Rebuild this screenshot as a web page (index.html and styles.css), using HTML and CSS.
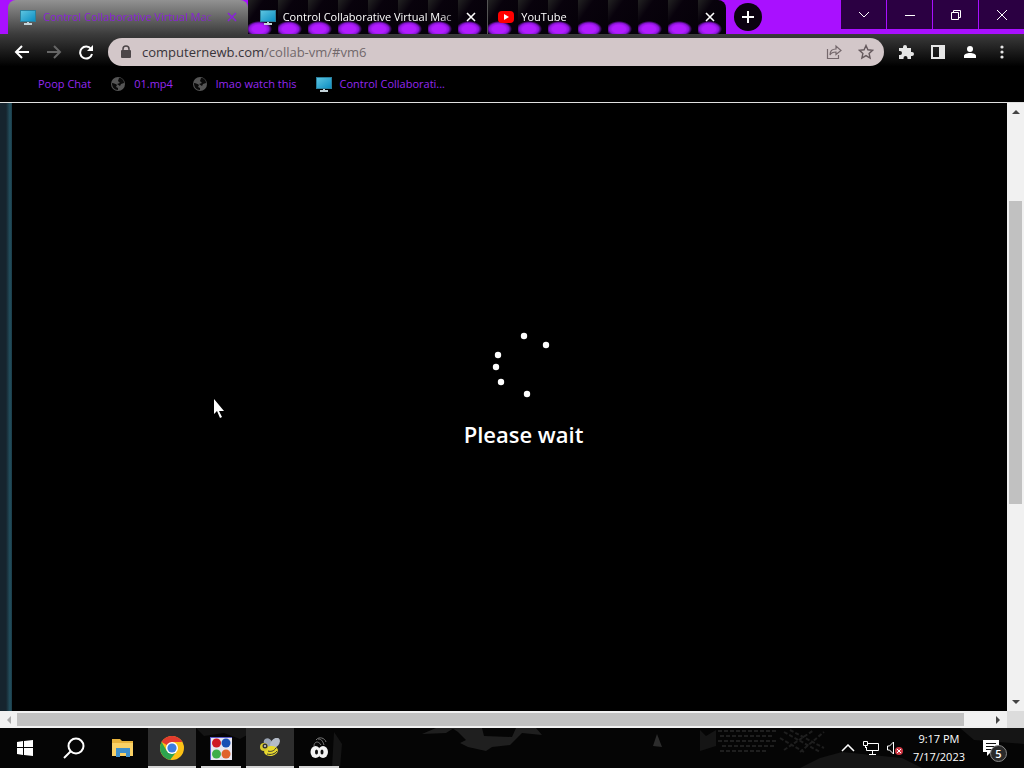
FILE: index.html
```html
<!DOCTYPE html>
<html lang="en">
<head>
    <meta charset="UTF-8">
    <meta name="viewport" content="width=device-width, initial-scale=1.0">
    <title>Control Collaborative Virtual Machines</title>
    <link rel="stylesheet" href="styles.css">
</head>
<body>

    <!-- shared shapes -->
    <svg class="defs" width="0" height="0">
        <defs>
            <linearGradient id="screenFill" x1="0" y1="0" x2="1" y2="1">
                <stop offset="0" stop-color="#5cc4e0"/>
                <stop offset="1" stop-color="#0d8fc4"/>
            </linearGradient>
            <symbol id="monitor" viewBox="0 0 16 16">
                <rect x="0" y="1" width="16" height="12" fill="#2b7f9c"/>
                <rect x="1" y="2" width="14" height="10" fill="url(#screenFill)"/>
                <path d="M7 13h2v1h3v2H4v-2h3z" fill="#c4d4da"/>
            </symbol>
            <symbol id="globe" viewBox="0 0 16 16">
                <circle cx="8" cy="8" r="7" fill="#555"/>
                <path d="M2 7c2 0 4 1 5 2l-1 2 2 1v2C4 14 2 11 2 7zM9 2c3 0 5 2 5 5l-3 1-1 2-3-2 3-1-2-2z" fill="#0a0a0a"/>
            </symbol>
            <symbol id="cross" viewBox="0 0 10 10">
                <path d="M1 1l8 8M9 1l-8 8" fill="none" stroke="currentColor" stroke-width="1.600"/>
            </symbol>
        </defs>
    </svg>

    <header class="titlebar">
        <div class="tabs">
            <div class="tab active">
                <svg class="favicon"><use href="#monitor"/></svg>
                <span class="tab-title">Control Collaborative Virtual Mac</span>
                <button class="tab-close" aria-label="Close tab"><svg><use href="#cross"/></svg></button>
            </div>
            <div class="tab">
                <svg class="favicon"><use href="#monitor"/></svg>
                <span class="tab-title">Control Collaborative Virtual Mac</span>
                <button class="tab-close" aria-label="Close tab"><svg><use href="#cross"/></svg></button>
            </div>
            <div class="tab last">
                <svg class="favicon" viewBox="0 0 16 16">
                    <rect x="0" y="2" width="16" height="12" rx="4" fill="#f00"/>
                    <path d="M6 5l5 3-5 3z" fill="#fff"/>
                </svg>
                <span class="tab-title">YouTube</span>
                <button class="tab-close" aria-label="Close tab"><svg><use href="#cross"/></svg></button>
            </div>
        </div>
        <button class="new-tab" aria-label="New tab">
            <svg width="12" height="12" viewBox="0 0 12 12"><path d="M6 0v12M0 6h12" stroke="#fff" stroke-width="2"/></svg>
        </button>
        <div class="window-buttons">
            <button aria-label="Search tabs"><svg width="12" height="12" viewBox="0 0 12 12"><path d="M1 3l5 5 5-5"/></svg></button>
            <button aria-label="Minimize"><svg width="12" height="12" viewBox="0 0 12 12"><path d="M1 6.500h10"/></svg></button>
            <button aria-label="Restore"><svg width="12" height="12" viewBox="0 0 12 12"><path d="M1.500 3.500h7v7h-7zM3.500 3.500v-2h7v7h-2"/></svg></button>
            <button aria-label="Close"><svg width="12" height="12" viewBox="0 0 12 12"><path d="M1 1l10 10M11 1l-10 10"/></svg></button>
        </div>
    </header>

    <nav class="toolbar">
        <button aria-label="Back"><svg width="16" height="16" viewBox="0 0 16 16"><path d="M15 8H2M8 2L2 8l6 6" fill="none" stroke="#fff" stroke-width="2"/></svg></button>
        <button aria-label="Forward" disabled><svg width="16" height="16" viewBox="0 0 16 16"><path d="M1 8h13M8 2l6 6-6 6" fill="none" stroke="#666" stroke-width="2"/></svg></button>
        <button aria-label="Reload"><svg width="16" height="16" viewBox="0 0 16 16"><path d="M13 5a6 6 0 1 0 1 5" fill="none" stroke="#fff" stroke-width="2"/><path d="M15 1v6H9z" fill="#fff"/></svg></button>
        <div class="omnibox">
            <svg width="10" height="14" viewBox="0 0 10 14"><rect x="0" y="5" width="10" height="8" rx="1" fill="#4c4648"/><path d="M2 6V4a3 3 0 0 1 6 0v2" fill="none" stroke="#4c4648" stroke-width="1.500"/></svg>
            <a class="address" href="#vm6">computernewb.com<span>/collab-vm/#vm6</span></a>
            <button aria-label="Share"><svg width="16" height="16" viewBox="0 0 16 16"><path d="M1.500 5v9.500h11V11M4 11c0-4 2-6 6-6V2l5 4.500-5 4V8C7 8 5 9 4 11z" fill="none" stroke="#75686c" stroke-width="1.200"/></svg></button>
            <button aria-label="Bookmark"><svg width="16" height="16" viewBox="0 0 16 16"><path d="M8 1.500l1.900 4.300 4.700.5-3.500 3.100 1 4.600L8 11.600 3.900 14l1-4.600L1.400 6.300l4.700-.5z" fill="none" stroke="#65595d" stroke-width="1.400"/></svg></button>
        </div>
        <button aria-label="Extensions"><svg width="16" height="16" viewBox="0 0 16 16"><path d="M1 4h4V3a2 2 0 0 1 4 0v1h4v4h1a2 2 0 0 1 0 4h-1v3H9.500v-1a2 2 0 0 0-4 0v1H1v-4h1a2 2 0 0 0 0-4H1z" fill="#e6e6e6"/></svg></button>
        <button aria-label="Side panel"><svg width="16" height="16" viewBox="0 0 16 16"><path d="M1 1h14v14H1zM3 3v10h6V3z" fill="#e6e6e6" fill-rule="evenodd"/></svg></button>
        <button class="profile" aria-label="Profile"><svg width="14" height="14" viewBox="0 0 14 14"><circle cx="7" cy="4" r="3" fill="#fff"/><path d="M1 13v-2c0-2 3-3 6-3s6 1 6 3v2z" fill="#fff"/></svg></button>
        <button aria-label="Menu"><svg width="16" height="16" viewBox="0 0 16 16" fill="#e6e6e6"><circle cx="8" cy="3" r="1.600"/><circle cx="8" cy="8" r="1.600"/><circle cx="8" cy="13" r="1.600"/></svg></button>
    </nav>

    <nav class="bookmarks">
        <a href="#">Poop Chat</a>
        <a href="#"><svg><use href="#globe"/></svg>01.mp4</a>
        <a href="#"><svg><use href="#globe"/></svg>lmao watch this</a>
        <a href="#"><svg><use href="#monitor"/></svg>Control Collaborati...</a>
    </nav>

    <main class="viewport">
        <section class="screen">
            <svg class="spinner" width="60" height="68" viewBox="0 0 60 68" fill="#fff">
                <circle cx="30" cy="4" r="3.200"/>
                <circle cx="52" cy="13" r="3.200"/>
                <circle cx="4" cy="23" r="3.200"/>
                <circle cx="2" cy="35" r="3.200"/>
                <circle cx="7" cy="50" r="3.200"/>
                <circle cx="33" cy="62" r="3.200"/>
            </svg>
            <p>Please wait</p>
            <svg class="cursor" width="12" height="20" viewBox="0 0 12 20"><path d="M1 0v15l3-3 3 7 2-1-3-6h5z" fill="#fff"/></svg>
        </section>
        <div class="scroll-y">
            <svg viewBox="0 0 8 4"><path d="M0 4l4-4 4 4z"/></svg>
            <div class="thumb"></div>
            <svg viewBox="0 0 8 4"><path d="M0 0l4 4 4-4z"/></svg>
        </div>
        <div class="scroll-x">
            <svg class="dim" viewBox="0 0 4 8"><path d="M4 0L0 4l4 4z"/></svg>
            <div class="thumb"></div>
            <svg viewBox="0 0 4 8"><path d="M0 0l4 4-4 4z"/></svg>
        </div>
        <div class="corner"></div>
    </main>

    <footer class="taskbar">
        <svg class="wallpaper" viewBox="0 0 1024 40" preserveAspectRatio="none" fill="#1f1f1f">
            <path d="M196 0h90l-12 6-20-3-14 8-16-6-20 3zM334 4l8 12-2 24h-8z" opacity=".6"/>
            <path d="M422 6l14-6h18l-8 5zM452 0h30l2 8 28 1 4-9h20l6 7-20-2-12 12-18 2-6 4-18-4-8-4 6-3-8-8z"/>
            <path d="M657 6l5 13-9-1z" fill="#2c2c2c"/>
            <path d="M700 2l6 6 10-6v16l-16 5zM820 30l22-6 60 6 20 10H800z" opacity=".6"/>
            <path d="M718 3h60M720 8h54M718 13h60M722 18h52M720 23h48M784 4l36 20M780 10l24 14M790 2l34 18M800 24l24-20M784 22l30-20" stroke="#1e1e1e" stroke-width="2" stroke-dasharray="4 2" fill="none"/>
            <path d="M960 0h64v16l-50-4z" opacity=".6"/>
        </svg>
        <div class="apps">
            <button aria-label="Start"><svg width="16" height="16" viewBox="0 0 16 16" fill="#fff"><path d="M0 2l6-1v6H0zM7 1l9-1v7H7zM0 8h6v7l-6-1zM7 8h9v8l-9-1z"/></svg></button>
            <button aria-label="Search"><svg width="22" height="22" viewBox="0 0 22 22"><circle cx="13" cy="9" r="7.500" fill="none" stroke="#fff" stroke-width="2"/><path d="M8 14l-7 7" stroke="#fff" stroke-width="2"/></svg></button>
            <button aria-label="File Explorer"><svg width="22" height="20" viewBox="0 0 22 20"><path d="M0 1h8l2 2h11v15H0z" fill="#e8b33c"/><path d="M0 5h21v13H0z" fill="#fad165"/><path d="M4 10h14v9h-4v-4H8v4H4z" fill="#3f8fca"/></svg></button>
            <button class="open current" aria-label="Chrome"><svg width="24" height="24" viewBox="0 0 24 24"><circle cx="12" cy="12" r="12" fill="#fbc116"/><path d="M12 12L1.600 6A12 12 0 0 1 22.400 6H12z" fill="#e33b2e"/><path d="M1.600 6l5.200 9 5.200 3-2 5.800A12 12 0 0 1 1.600 6z" fill="#2da44e"/><path d="M10 24l7-9-5 3-5-3z" fill="#2da44e"/><circle cx="12" cy="12" r="6" fill="#fff"/><circle cx="12" cy="12" r="4.600" fill="#3b7de0"/></svg></button>
            <button class="open" aria-label="Games"><svg width="22" height="23" viewBox="0 0 22 23"><path d="M0 0h22v23H0z" fill="#5a5ac8"/><path d="M1 1h21v22H1z" fill="#e8e8f2"/><circle cx="6.500" cy="6" r="4.500" fill="#cf1824"/><circle cx="16" cy="6" r="4.500" fill="#174fb4"/><circle cx="6.500" cy="17" r="4.500" fill="#3fae49"/><circle cx="16" cy="17" r="4.500" fill="#e0642c"/></svg></button>
            <button class="open current" aria-label="Bee"><svg width="22" height="20" viewBox="0 0 22 20"><ellipse cx="9" cy="5" rx="4" ry="5" fill="#9aa4b4" transform="rotate(-30 9 5)"/><ellipse cx="16" cy="5" rx="6" ry="4" fill="#b5bcc8" transform="rotate(-50 16 5)"/><ellipse cx="12" cy="13" rx="7" ry="5" fill="#e8d92e" transform="rotate(-10 12 13)"/><path d="M9 13c3 1 6 0 8-3M8 16c4 1 8 0 10-3" stroke="#333" fill="none"/><circle cx="5" cy="9" r="4" fill="#d8c92e"/><circle cx="6" cy="8" r="2.500" fill="#333"/><circle cx="6" cy="8" r="1" fill="#ddd"/></svg></button>
            <button class="open" aria-label="Eyes"><svg width="18" height="22" viewBox="0 0 18 22"><path d="M4 9C4 5 8 3 11 8M6 3c3-4 9-2 10 2M8 2c4 0 5 3 6 6" fill="none" stroke="#777"/><ellipse cx="5.500" cy="15" rx="5" ry="6" fill="#f4f4f4"/><ellipse cx="13" cy="15" rx="5" ry="6" fill="#f4f4f4"/><ellipse cx="6.500" cy="15" rx="1.500" ry="2.500" fill="#111"/><ellipse cx="12" cy="15" rx="1.500" ry="2.500" fill="#111"/></svg></button>
        </div>
        <div class="tray">
            <svg width="14" height="8" viewBox="0 0 14 8"><path d="M1 7l6-6 6 6" fill="none" stroke="#fff" stroke-width="1.500"/></svg>
            <svg width="16" height="16" viewBox="0 0 16 16" fill="none" stroke="#fff"><path d="M5 3.500h10.500v7H3.500V7M.5 1.500h4v4h-4zM2.500 5v3M9.500 11v3M6 14.500h7"/></svg>
            <svg width="16" height="16" viewBox="0 0 16 16"><path d="M.5 6v4h2l4 4V2l-4 4z" fill="none" stroke="#fff"/><circle cx="12" cy="11" r="4" fill="#cf3945"/><path d="M10 9l4 4M14 9l-4 4" stroke="#fff"/></svg>
            <div class="clock">
                <time>9:17 PM</time>
                <time>7/17/2023</time>
            </div>
            <button class="notifications" aria-label="Notifications">
                <svg width="16" height="16" viewBox="0 0 16 16"><path d="M0 0h16v12h-8l-4 4v-4H0z" fill="#fff"/><path d="M3 3.500h10M3 6.500h10M3 9.500h6" stroke="#111"/></svg>
                <span class="badge">5</span>
            </button>
        </div>
    </footer>

</body>
</html>
```

FILE: styles.css
```css
* {
    box-sizing: border-box;
}
body {
    margin: 0;
    height: 100vh;
    display: flex;
    flex-direction: column;
    background: #000;
    color: #fff;
    font-family: "Open Sans", "Noto Sans", sans-serif;
    font-size: 11px;
    overflow: hidden;
}
.defs {
    position: absolute;
}
button {
    display: flex;
    align-items: center;
    justify-content: center;
    padding: 0;
    border: none;
    background: none;
    color: inherit;
    font: inherit;
}
a {
    color: inherit;
    text-decoration: none;
}

/* tab strip */
.titlebar {
    display: flex;
    height: 34px;
    padding-left: 8px;
    background: #a910ff;
}
.tabs {
    display: flex;
    flex: 0 1 718px;
    min-width: 0;
}
.tab {
    display: flex;
    align-items: center;
    flex: 1;
    min-width: 0;
    padding: 0 11px 0 12px;
    background:
        radial-gradient(ellipse 13px 8px at 11px 29px, #b21cff 50%, #8a14d8 75%, transparent),
        linear-gradient(125deg, #222 0, #08020c 30%, #050108 100%);
    background-size: 30px 34px;
}
.tab.active {
    border-radius: 8px 8px 0 0;
    background: linear-gradient(#929292, #3c3c3c);
    color: #8a22d8;
}
.tab.last {
    padding-left: 10px;
    border-left: 1px solid #555;
    border-radius: 0 8px 0 0;
}
.favicon {
    flex: none;
    width: 16px;
    height: 16px;
}
.tab-title {
    flex: 1;
    margin: 0 4px 2px 7px;
    white-space: nowrap;
    mask-image: linear-gradient(90deg, #000 88%, transparent);
}
.tab-close svg {
    width: 10px;
    height: 10px;
}
.new-tab {
    align-self: center;
    width: 28px;
    height: 28px;
    margin-left: 8px;
    border-radius: 50%;
    background: #0b0210;
}
.window-buttons {
    display: flex;
    gap: 1px;
    height: 29px;
    margin-left: auto;
}
.window-buttons button {
    width: 45px;
    background: #2b0042;
}
.window-buttons path {
    fill: none;
    stroke: #fff;
}

/* address row */
.toolbar {
    display: flex;
    align-items: center;
    gap: 16px;
    height: 36px;
    padding: 0 14px;
    background: linear-gradient(#3c3c3c, #000 90%);
}
.toolbar button {
    flex: none;
    width: 16px;
    height: 16px;
}
.omnibox {
    display: flex;
    align-items: center;
    flex: 1;
    gap: 16px;
    height: 28px;
    margin-left: -2px;
    margin-right: -2px;
    padding: 0 10px 0 13px;
    border-radius: 14px;
    background: #d3c7c9;
}
.address {
    flex: 1;
    margin-left: -5px;
    color: #39343a;
    font-size: 13px;
}
.address span {
    color: #71686b;
}

/* bookmarks row */
.bookmarks {
    display: flex;
    align-items: center;
    gap: 19px;
    height: 33px;
    padding: 0 38px 5px;
    border-bottom: 1px solid #e0e0e0;
    color: #9428f0;
}
.bookmarks a {
    display: flex;
    align-items: center;
    gap: 8px;
}
.bookmarks svg {
    width: 16px;
    height: 16px;
}

/* page with scrollbars */
.viewport {
    display: grid;
    grid-template-columns: 1fr 17px;
    grid-template-rows: 1fr 17px;
    flex: 1;
    min-height: 0;
}
.screen {
    position: relative;
    display: flex;
    flex-direction: column;
    align-items: center;
    justify-content: center;
    gap: 18px;
    padding: 0 0 32px 40px;
    background: linear-gradient(90deg, #16242e 0, #16242e 6px, #23505f 10px, #1a3a46 12px, #000 12px);
}
.spinner {
    overflow: visible;
}
.screen p {
    margin: 0;
    font-size: 22px;
    font-weight: 600;
    line-height: 32px;
}
.cursor {
    position: absolute;
    left: 213px;
    top: 296px;
}
.scroll-y,
.scroll-x {
    display: flex;
    align-items: center;
    background: #f1f1f1;
    fill: #444;
}
.scroll-y {
    flex-direction: column;
    padding: 7px 0;
}
.scroll-x {
    padding: 0 7px;
}
.scroll-y svg {
    width: 8px;
    height: 4px;
}
.scroll-x svg {
    width: 4px;
    height: 8px;
}
.scroll-x .dim {
    fill: #aaa;
}
.thumb {
    background: #c1c1c1;
}
.scroll-y .thumb {
    width: 13px;
    height: 51%;
    margin: 87px 0 auto;
}
.scroll-x .thumb {
    flex: 1;
    height: 13px;
    margin: 0 32px 0 6px;
}
.corner {
    background: #dcdcdc;
}

/* taskbar */
.taskbar {
    position: relative;
    display: flex;
    justify-content: space-between;
    height: 40px;
    background: #050505;
}
.wallpaper {
    position: absolute;
    width: 100%;
    height: 100%;
}
.apps,
.tray {
    position: relative;
    display: flex;
    align-items: center;
}
.apps {
    gap: 1px;
    padding-left: 1px;
}
.apps button {
    width: 48px;
    height: 40px;
}
.apps .open {
    background: linear-gradient(#d4d4d4, #d4d4d4) center bottom / 40px 2px no-repeat;
}
.apps .current {
    background-color: #2e2e2e;
    background-size: 48px 2px;
}
.tray {
    gap: 8px;
    padding-right: 25px;
}
.clock {
    display: flex;
    flex-direction: column;
    align-items: center;
    margin-left: 2px;
    line-height: 18px;
}
.notifications {
    position: relative;
    margin-left: 10px;
}
.badge {
    position: absolute;
    left: 7px;
    top: 5px;
    width: 17px;
    height: 17px;
    border: 1px solid #888;
    border-radius: 50%;
    background: #2a2a2a;
    font-weight: 600;
    line-height: 15px;
    text-align: center;
}
```
